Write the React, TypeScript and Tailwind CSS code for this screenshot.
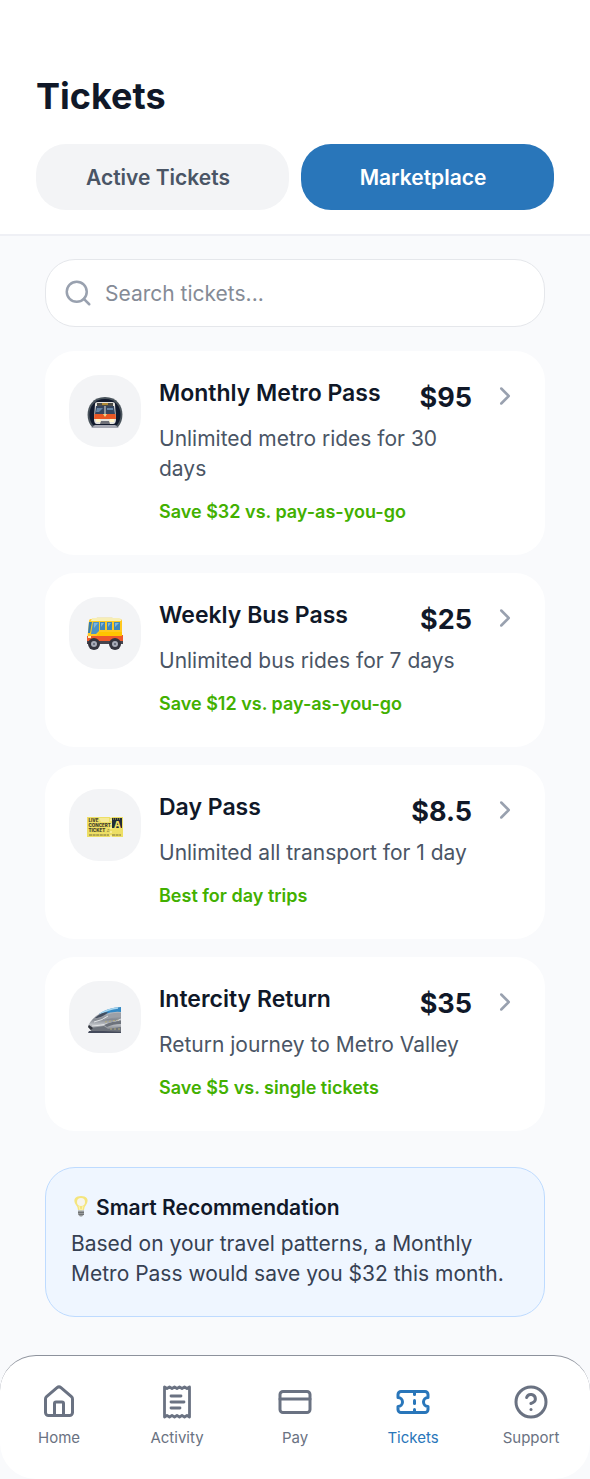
import React from "react";
import {
  ChevronRight,
  CircleQuestionMark,
  CreditCard,
  House,
  Search,
  Ticket,
} from "lucide-react";

function MetroArt() {
  return (
    <svg viewBox="0 0 36 36" className="size-9" aria-hidden="true">
      <path d="M5 34C-3 26 -1 4 18 4s21 22 13 30z" fill="#4a545c" />
      <path d="M6 32C-1 24 2 6 18 6s19 18 12 26z" fill="#10192d" />
      <path d="M8 32h20l4 3H4z" fill="#a7a9b4" />
      <path d="M8 11q0-2 3-2h14q3 0 3 2l1 15q0 5-3 5H10q-3 0-3-5z" fill="#e4e3df" />
      <path d="M10 10h16v3H10z" fill="#4c4c48" />
      <path d="M15 11h6" stroke="#d5a12f" strokeWidth="1.5" />
      <path d="M9 13h8.500v8H8zM18.500 13H27l1 8h-9.500z" fill="#33445f" />
      <path d="M10 15h6l-4 4H9zM20 15h6v2h-6z" fill="#6584a3" />
      <path d="M7.500 21h21l.5 5H7z" fill="#e95724" />
      <path d="M16 21h4l-2 3z" fill="#f1d486" />
      <path d="M9 26h4l1 3H9zM23 26h4v3h-5z" fill="#fff7cc" />
      <path d="M14 28h8l1 3H13z" fill="#6e7078" />
    </svg>
  );
}

function BusArt() {
  return (
    <svg viewBox="0 0 36 36" className="size-9" aria-hidden="true">
      <path d="M9 4l1-2h15l2 2z" fill="#f1e9c4" />
      <path d="M4 4h29q2 0 2 2v20q0 3-3 3H3q-3 0-3-3l1-9L2 6q0-2 2-2z" fill="#ffc81f" />
      <path d="M5 3h27q2 0 2 2v1H4z" fill="#f7eeb5" />
      <path d="M2 7h3L3 18H1z" fill="#367dac" />
      <path d="M6 7h6v9l-3 3H4z" fill="#4d92c5" />
      <path d="M13 7h5v8h-5zM20 7h5v8h-5zM27 7h6v8h-6z" fill="#4187b9" />
      <path d="M7 8h4l-4 5zM14 8h3l-3 4zM21 8h3l-3 4zM28 8h4l-4 4z" fill="#80b6db" />
      <path d="M0 21h10l2-1h24v6H0z" fill="#ed592c" />
      <path d="M12 17h23v4H10z" fill="#ffc400" />
      <path d="M0 26h36v3H0z" fill="#46454e" />
      <circle cx="7" cy="29" r="6" fill="#34343e" />
      <circle cx="28" cy="29" r="6" fill="#34343e" />
      <circle cx="7" cy="29" r="3" fill="#a7abb7" />
      <circle cx="28" cy="29" r="3" fill="#a7abb7" />
      <circle cx="7" cy="29" r="1" fill="#5b6070" />
      <circle cx="28" cy="29" r="1" fill="#5b6070" />
      <path d="M1 21h3v2H1z" fill="#fff1b3" />
    </svg>
  );
}

function DayTicketArt() {
  return (
    <svg viewBox="0 0 36 36" className="size-9" aria-hidden="true">
      <path d="M0 10h23q1 2 2 0h11v20H25q-1-2-2 0H0z" fill="#eddf65" />
      <path d="M12 11h10v4h-8z" fill="#f5e997" />
      <path d="M24 12v17" stroke="#fff9cc" strokeDasharray="2 2" />
      <path d="M25 11h10v10H25z" fill="#202b36" />
      <path d="M26 12h8" stroke="#c7bb57" strokeDasharray="1 1" />
      <g fontFamily="Inter, sans-serif" fontWeight="800">
        <text x="27" y="20.500" fontSize="9" fill="#eddf65">A</text>
        <g fontSize="4.500" fill="#3f3c28">
          <text x="1.500" y="15">LIVE</text>
          <text x="1.500" y="20">CONCERT</text>
          <text x="1.500" y="25">TICKET ♫</text>
        </g>
      </g>
      <path d="M2 28h20m3 0h9" fill="none" stroke="#79713a" strokeDasharray="3 .6" />
    </svg>
  );
}

function TrainArt() {
  return (
    <svg viewBox="0 0 36 36" className="size-9" aria-hidden="true">
      <defs>
        <linearGradient id="train-body" x1="0" y1="0" x2="0" y2="1">
          <stop offset="0" stopColor="#d9dce1" />
          <stop offset=".5" stopColor="#858a92" />
          <stop offset=".7" stopColor="#bcbfc4" />
          <stop offset="1" stopColor="#62666e" />
        </linearGradient>
      </defs>
      <path d="M1 28Q1 24 9 17Q18 9 34 8v25H5z" fill="url(#train-body)" />
      <path d="M12 15Q20 9 34 8v5q-9-1-18 3z" fill="#3489c4" />
      <path d="M13 15q8-5 18-6" fill="none" stroke="#a6d6f0" strokeWidth="1.5" />
      <path d="M8 19q6-6 13-6-3 4-11 6z" fill="#444d5d" />
      <path d="M17 18q8-5 17-4v4q-9 0-17 3z" fill="#9ca0a7" />
      <path d="M7 23q9-2 14-6M5 27q18-1 29-7" fill="none" stroke="#e2e4e6" />
      <path d="M17 26q8-4 17-4v3q-8 0-14 3zM4 29l13-2 4 3 13-2v4H5z" fill="#6d727b" />
      <path d="M18 23l13-2M23 30h10" stroke="#b4a978" strokeDasharray="2 2" />
      <path d="M2 26l4 3-2 2-3-3z" fill="#31343d" />
      <path d="M2 32h14l18 1v1H1z" fill="#444a5b" />
    </svg>
  );
}

function BulbArt() {
  return (
    <svg viewBox="0 0 20 24" className="h-6 w-5" aria-hidden="true">
      <path d="M7 14Q7 11 5 9C1 3 5 0 10 0s9 3 5 9q-2 2-2 5z" fill="#f4e57e" />
      <ellipse cx="10" cy="6" rx="4" ry="4" fill="#f6f5ed" />
      <path d="M8 10l1 4h2l1-4" fill="none" stroke="#fff6b4" />
      <path d="M7 14.500h6v4l-2 2H9l-2-2z" fill="#989b9c" />
      <path d="M7 16.500h6M8 18.500h5" stroke="#5e6366" strokeWidth=".7" />
    </svg>
  );
}

function ReceiptIcon() {
  return (
    <svg
      viewBox="0 0 36 36"
      className="size-9"
      fill="none"
      stroke="currentColor"
      strokeWidth="2.800"
      strokeLinecap="round"
      strokeLinejoin="round"
      aria-hidden="true"
    >
      <path d="M5.500 3v30l2.500-1.500 2.500 1.500 2.500-1.500 2.500 1.500 2.500-1.500 2.500 1.500 2.500-1.500 2.500 1.500 2.500-1.500 2.500 1.500V3L28 4.500 25.500 3 23 4.500 20.500 3 18 4.500 15.500 3 13 4.500 10.500 3 8 4.500z" />
      <path d="M12 12h10M12 18h13M12 24h9" />
    </svg>
  );
}

type Pass = {
  name: string;
  price: string;
  text: string;
  note: string;
  art: React.ReactNode;
};

const passes: Pass[] = [
  {
    name: "Monthly Metro Pass",
    price: "$95",
    text: "Unlimited metro rides for 30 days",
    note: "Save $32 vs. pay-as-you-go",
    art: <MetroArt />,
  },
  {
    name: "Weekly Bus Pass",
    price: "$25",
    text: "Unlimited bus rides for 7 days",
    note: "Save $12 vs. pay-as-you-go",
    art: <BusArt />,
  },
  {
    name: "Day Pass",
    price: "$8.5",
    text: "Unlimited all transport for 1 day",
    note: "Best for day trips",
    art: <DayTicketArt />,
  },
  {
    name: "Intercity Return",
    price: "$35",
    text: "Return journey to Metro Valley",
    note: "Save $5 vs. single tickets",
    art: <TrainArt />,
  },
];

function PassCard({ pass }: { pass: Pass }) {
  return (
    <a
      href="#pass"
      className="flex items-start gap-[18px] rounded-[30px] bg-white pt-6 pr-[25px] pb-[27px] pl-6"
    >
      <div className="flex size-[72px] shrink-0 items-center justify-center rounded-[30px] bg-[#f3f4f6]">
        {pass.art}
      </div>
      <div className="min-w-0 flex-1">
        <div className="mb-1 flex items-start justify-between">
          <h2 className="text-[23px] leading-9 font-semibold whitespace-nowrap text-[#101828]">
            {pass.name}
          </h2>
          <span className="text-[27px] leading-[45px] font-bold text-[#101828]">{pass.price}</span>
        </div>
        <p className="text-[21px] leading-[30px] text-[#4a5565]">{pass.text}</p>
        <p className="mt-3 text-lg leading-8 font-semibold text-[#42b000]">{pass.note}</p>
      </div>
      <ChevronRight className="mt-1.5 size-[30px] shrink-0 text-[#99a1af]" />
    </a>
  );
}

const tabs = [
  { label: "Home", icon: <House className="size-9" /> },
  { label: "Activity", icon: <ReceiptIcon /> },
  { label: "Pay", icon: <CreditCard className="size-9" /> },
  { label: "Tickets", icon: <Ticket className="size-9" />, active: true },
  { label: "Support", icon: <CircleQuestionMark className="size-9" /> },
];

export default function App() {
  return (
    <div className="flex min-h-screen flex-col bg-[#f9fafc] font-['Inter',sans-serif]">
      <header className="border-b-2 border-[#eff0f5] bg-white px-9 pt-[69px] pb-6">
        <h1 className="text-4xl leading-[54px] font-bold text-[#101828]">Tickets</h1>
        <div className="mt-[21px] grid grid-cols-2 gap-3">
          <button
            type="button"
            className="h-[66px] rounded-[30px] bg-[#f3f4f6] pt-0.5 pr-[9px] text-[21px] font-semibold text-[#4a5565]"
          >
            Active Tickets
          </button>
          <button
            type="button"
            className="h-[66px] rounded-[30px] bg-[#2976ba] pt-0.5 pr-[9px] text-[21px] font-semibold text-white"
          >
            Marketplace
          </button>
        </div>
      </header>

      <main className="px-[45px] pt-[23px] pb-[38px]">
        <label className="flex h-[68px] items-center gap-3 rounded-[30px] border border-[#e5e7eb] bg-white px-[17px]">
          <Search className="size-[30px] shrink-0 text-[#99a1af]" />
          <input
            type="search"
            aria-label="Search tickets"
            placeholder="Search tickets..."
            className="w-full min-w-0 bg-transparent pt-0.5 text-[21px] text-[#101828] outline-none placeholder:text-[#858b96]"
          />
        </label>

        <div className="mt-6 flex flex-col gap-[18px]">
          {passes.map((pass) => (
            <PassCard key={pass.name} pass={pass} />
          ))}
        </div>

        <section className="mt-9 rounded-[30px] border border-[#bedbff] bg-[#eff6ff] px-[25px] pt-[22px] pb-[27px]">
          <h2 className="flex items-center gap-[5px] text-[21px] leading-9 font-semibold text-[#101828]">
            <BulbArt />
            Smart Recommendation
          </h2>
          <p className="mt-[3px] text-[21px] leading-[30px] text-[#364153]">
            Based on your travel patterns, a Monthly Metro Pass would save you $32 this month.
          </p>
        </section>
      </main>

      <nav className="mt-auto grid grid-cols-5 rounded-[36px] border-t border-[#8d929c] bg-white pt-7 pb-[29px]">
        {tabs.map((tab) => (
          <a
            key={tab.label}
            href={"#" + tab.label.toLowerCase()}
            aria-current={tab.active ? "page" : undefined}
            className={
              tab.active
                ? "flex flex-col items-center gap-1.5 text-[15px] leading-6 text-[#2976ba]"
                : "flex flex-col items-center gap-1.5 text-[15px] leading-6 text-[#6a7282]"
            }
          >
            {tab.icon}
            <span>{tab.label}</span>
          </a>
        ))}
      </nav>
    </div>
  );
}
